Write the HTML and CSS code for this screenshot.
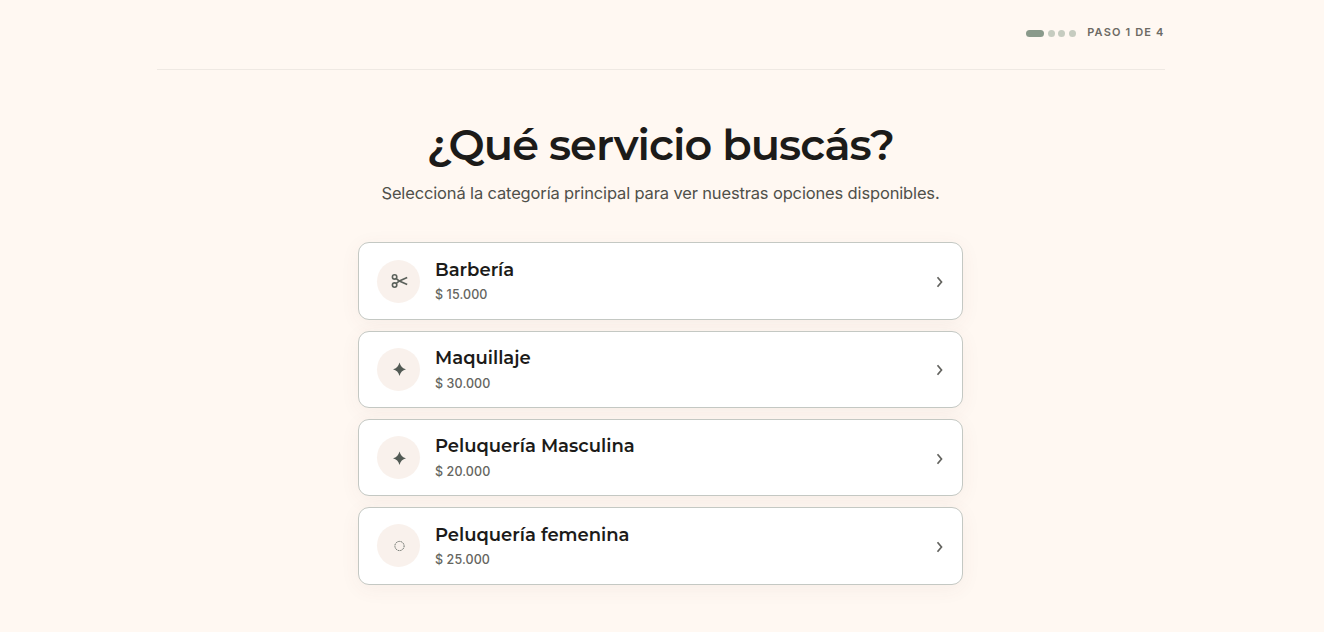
FILE: index.html
```
<!DOCTYPE html>
<html lang="es">
  <head>
    <title>Reservar turno</title>
    <meta charset="UTF-8">
    <link rel="stylesheet" href="styles.css">
  </head>
  <body>
    <div class="container">
      <header class="header">
        <div class="steps">
          <span class="step active"></span>
          <span class="step"></span>
          <span class="step"></span>
          <span class="step"></span>
        </div>
        <span class="step-label">PASO 1 DE 4</span>
      </header>

      <main class="content">
        <h1>¿Qué servicio buscás?</h1>
        <p class="subtitle">Seleccioná la categoría principal para ver nuestras opciones disponibles.</p>

        <div class="services">
          <a class="card">
            <span class="icon">
              <svg width="18" height="18" viewBox="0 0 18 18" fill="none" stroke="#5b615b" stroke-width="1.6">
                <circle cx="4.6" cy="4.9" r="2.2"/>
                <circle cx="4.6" cy="13.1" r="2.2"/>
                <path d="M6.2 6.5 8.8 8.7 17.2 12.6M6.2 11.5 8.8 9.3 17.2 5.4"/>
              </svg>
            </span>
            <span class="info">
              <span class="name">Barbería</span>
              <span class="price">$ 15.000</span>
            </span>
            <svg class="arrow" width="8" height="12" viewBox="0 0 8 12"><path d="M1.5 1.3 5.5 6 1.5 10.7"/></svg>
          </a>
          <a class="card">
            <span class="icon">
              <svg width="14" height="14" viewBox="0 0 14 14" fill="#525a54"><path d="M7.5 .4Q8.9 5.9 14 7.2 8.9 8.5 7.5 14 6.1 8.5 1 7.2 6.1 5.9 7.5 .4Z"/></svg>
            </span>
            <span class="info">
              <span class="name">Maquillaje</span>
              <span class="price">$ 30.000</span>
            </span>
            <svg class="arrow" width="8" height="12" viewBox="0 0 8 12"><path d="M1.5 1.3 5.5 6 1.5 10.7"/></svg>
          </a>
          <a class="card">
            <span class="icon">
              <svg width="14" height="14" viewBox="0 0 14 14" fill="#525a54"><path d="M7.5 .4Q8.9 5.9 14 7.2 8.9 8.5 7.5 14 6.1 8.5 1 7.2 6.1 5.9 7.5 .4Z"/></svg>
            </span>
            <span class="info">
              <span class="name">Peluquería Masculina</span>
              <span class="price">$ 20.000</span>
            </span>
            <svg class="arrow" width="8" height="12" viewBox="0 0 8 12"><path d="M1.5 1.3 5.5 6 1.5 10.7"/></svg>
          </a>
          <a class="card">
            <span class="icon">
              <svg width="12" height="12" viewBox="0 0 12 12" fill="none" stroke="#4a524c" stroke-width=".9" stroke-dasharray="1.2 .7"><circle cx="6.5" cy="6" r="4.6"/></svg>
            </span>
            <span class="info">
              <span class="name">Peluquería femenina</span>
              <span class="price">$ 25.000</span>
            </span>
            <svg class="arrow" width="8" height="12" viewBox="0 0 8 12"><path d="M1.5 1.3 5.5 6 1.5 10.7"/></svg>
          </a>
        </div>
      </main>
    </div>
  </body>
</html>
```
FILE: styles.css
```
* {
  box-sizing: border-box;
}

body {
  margin: 0;
  height: 632px;
  overflow: hidden;
  background-color: #fff8f2;
  font-family: Inter, sans-serif;
  color: #1c1b19;
}

.container {
  width: 1008px;
  margin-left: 156.5px;
}

.header {
  display: flex;
  justify-content: flex-end;
  align-items: center;
  gap: 11px;
  height: 70px;
  padding-bottom: 5px;
  border-bottom: 1px solid #efe9e3;
}

.steps {
  display: flex;
  gap: 3.8px;
  padding-top: 3px;
}

.step {
  width: 7px;
  height: 7px;
  border-radius: 4px;
  background-color: #c6ccc0;
}

.step.active {
  width: 18px;
  background-color: #8a9a8b;
}

.step-label {
  font-size: 11px;
  font-weight: 600;
  line-height: 16px;
  letter-spacing: 1.15px;
  color: #6d6a64;
}

.content {
  width: 605px;
  margin: 0 auto;
  padding-top: 48px;
}

h1 {
  margin: 0;
  font-family: Montserrat, Inter, sans-serif;
  font-size: 43px;
  font-weight: 600;
  line-height: 53px;
  letter-spacing: -0.93px;
  text-align: center;
  white-space: nowrap;
}

.subtitle {
  margin: 9px 0 0;
  font-size: 16.5px;
  line-height: 27px;
  letter-spacing: -0.15px;
  text-align: center;
  white-space: nowrap;
  color: #50504a;
}

.services {
  display: flex;
  flex-direction: column;
  gap: 11px;
  margin-top: 35.45px;
}

.card {
  display: flex;
  align-items: center;
  height: 77.3px;
  padding: 0 18px;
  border: 1px solid #c4c8c3;
  border-radius: 11px;
  background-color: #fff;
  box-shadow: 0 4px 20px rgba(120, 70, 60, 0.06);
}

.icon {
  display: flex;
  align-items: center;
  justify-content: center;
  width: 43px;
  height: 43px;
  margin-right: 15px;
  border-radius: 50%;
  background-color: #f9f1ec;
}

.info {
  display: flex;
  flex: 1;
  flex-direction: column;
}

.name {
  font-family: Montserrat, Inter, sans-serif;
  font-size: 18px;
  font-weight: 600;
  line-height: 25.4px;
}

.price {
  font-size: 12.5px;
  font-weight: 550;
  line-height: 18px;
  letter-spacing: 0.1px;
  margin-top: 3.2px;
  color: #656560;
}

.arrow {
  margin-top: 2px;
  fill: none;
  stroke: #62625e;
  stroke-width: 1.7;
}
```
